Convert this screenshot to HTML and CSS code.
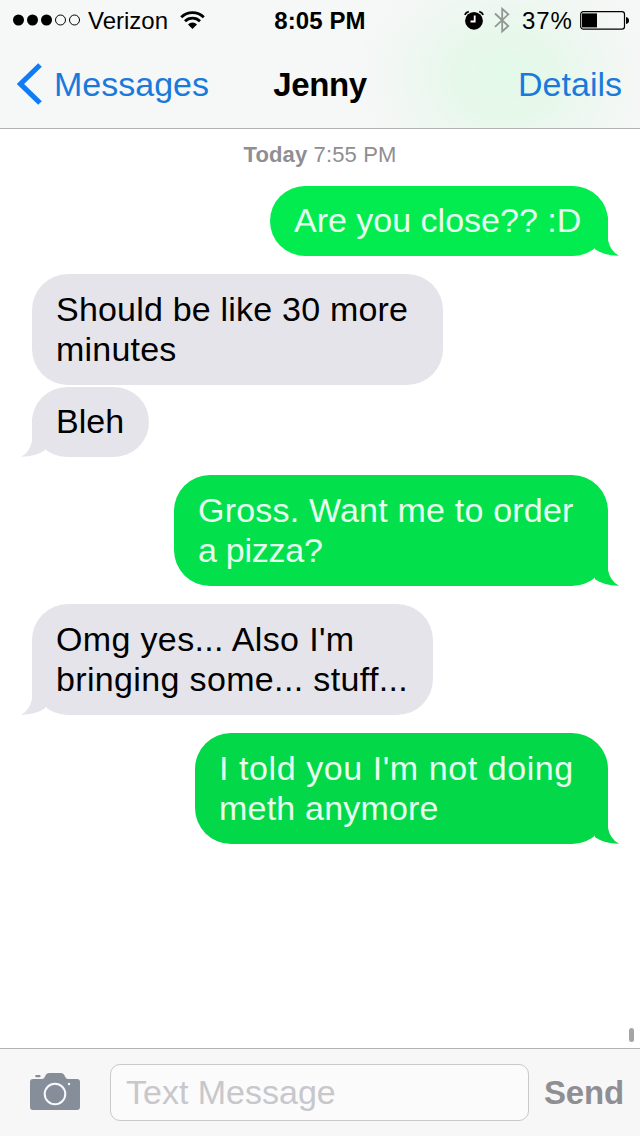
FILE: index.html
```html
<!DOCTYPE html>
<html lang="en">
<head>
    <meta charset="UTF-8">
    <title>Messages</title>
    <link rel="stylesheet" href="styles.css">
</head>
<body>

    <div class="phone">
        <header>
            <div class="status">
                <div class="status-left">
                    <svg class="signal" width="68" height="12" viewBox="0 0 68 12">
                        <circle cx="5.5" cy="6" r="5.5"/>
                        <circle cx="19.5" cy="6" r="5.5"/>
                        <circle cx="33.5" cy="6" r="5.5"/>
                        <circle class="empty" cx="47.5" cy="6" r="5"/>
                        <circle class="empty" cx="61.5" cy="6" r="5"/>
                    </svg>
                    <span class="carrier">Verizon</span>
                    <svg class="wifi" width="25" height="19" viewBox="0 0 25 19">
                        <path class="arc" d="M1.2 6.2a16 16 0 0 1 22.6 0M5 10.2a10.8 10.8 0 0 1 15 0"/>
                        <path d="M8 13.4a6.5 6.5 0 0 1 9 0L12.5 18z"/>
                    </svg>
                </div>
                <span class="clock">8:05 PM</span>
                <div class="status-right">
                    <svg class="alarm" width="20" height="20" viewBox="0 0 20 20">
                        <circle cx="10" cy="10.8" r="8.9"/>
                        <path class="bells" d="M.8 4.9Q1.8 2.1 4.8 1.6M19.2 4.9Q18.2 2.1 15.2 1.6"/>
                        <path class="hands" d="M10.7 5.5v6H6.5"/>
                    </svg>
                    <svg class="bluetooth" width="16" height="28" viewBox="0 0 16 28">
                        <path d="M1 7.5L14.3 20 8.2 25.5V2.8L14.3 8.3 1 20.8"/>
                    </svg>
                    <span class="percent">37%</span>
                    <svg class="battery" width="50" height="20" viewBox="0 0 50 20">
                        <rect class="case" x=".7" y="1.6" width="43.8" height="17.6" rx="2.6"/>
                        <rect x="2" y="3.4" width="15" height="14"/>
                        <path d="M46 7q3 .5 3 3.5t-3 3.5z"/>
                    </svg>
                </div>
            </div>
            <nav>
                <a class="back">
                    <svg width="27" height="42" viewBox="0 0 27 42">
                        <path d="M24 2L4.5 21 24 40"/>
                    </svg>
                    <span>Messages</span>
                </a>
                <h1>Jenny</h1>
                <a class="details">Details</a>
            </nav>
        </header>

        <main>
            <p class="stamp"><b>Today</b> 7:55 PM</p>

            <div class="bubble sent close">
                <p>Are you close?? :D</p>
                <svg class="tail" width="41" height="40"><path d="M30 0V24Q32 35 41 39.8Q27 40 17 33.3V12z"/></svg>
            </div>
            <div class="bubble received should">
                <p class="loose">Should be like 30 more</p>
                <p class="loose">minutes</p>
            </div>
            <div class="bubble received bleh">
                <p>Bleh</p>
                <svg class="tail" width="41" height="40"><path d="M30 0V24Q32 35 41 39.8Q27 40 17 33.3V12z"/></svg>
            </div>
            <div class="bubble sent pizza">
                <p class="loose">Gross. Want me to order</p>
                <p class="tight">a pizza?</p>
                <svg class="tail" width="41" height="40"><path d="M30 0V24Q32 35 41 39.8Q27 40 17 33.3V12z"/></svg>
            </div>
            <div class="bubble received stuff">
                <p class="looser">Omg yes... Also I'm</p>
                <p class="looser">bringing some... stuff...</p>
                <svg class="tail" width="41" height="40"><path d="M30 0V24Q32 35 41 39.8Q27 40 17 33.3V12z"/></svg>
            </div>
            <div class="bubble sent told">
                <p class="loosest">I told you I'm not doing</p>
                <p class="loose">meth anymore</p>
                <svg class="tail" width="41" height="40"><path d="M30 0V24Q32 35 41 39.8Q27 40 17 33.3V12z"/></svg>
            </div>
            <div class="scrollbar"></div>
        </main>

        <footer>
            <svg class="camera" width="50" height="38" viewBox="0 0 50 38">
                <path d="M3 7H12Q14 7 15 4.5L16 2.5Q17 1 19 1H31Q33 1 34 2.5L35 4.5Q36 7 38 7H47Q50 7 50 10V35Q50 38 47 38H3Q0 38 0 35V10Q0 7 3 7z"/>
                <rect x="5.3" y="3" width="5.2" height="2.2" rx=".8"/>
                <circle class="lens" cx="25" cy="22" r="10.3"/>
                <circle class="flash" cx="39" cy="12" r="1.2"/>
            </svg>
            <div class="field">Text Message</div>
            <span class="send">Send</span>
        </footer>
    </div>

</body>
</html>
```

FILE: styles.css
```css
* {
    margin: 0;
    padding: 0;
    box-sizing: border-box;
}
body {
    font-family: "Liberation Sans", Arial, sans-serif;
    background-color: white;
    color: black;
}
svg {
    display: block;
    flex: none;
}
.phone {
    display: flex;
    flex-direction: column;
    width: 640px;
    height: 1136px;
    overflow: hidden;
}

/* status bar and title */
header {
    height: 129px;
    border-bottom: 1px solid #b2b2b2;
    background: radial-gradient(ellipse 150px 125px at 505px 76px, #e2f9e8 0%, #e7f8eb 35%, #f1f7f3 70%, #f6f7f7 100%);
}
.status {
    display: grid;
    grid-template-columns: 1fr auto 1fr;
    align-items: center;
    height: 40px;
    font-size: 24px;
    white-space: nowrap;
}
.status span {
    padding-top: 2px;
}
.status-left {
    display: flex;
    align-items: center;
    padding-left: 13px;
}
.signal .empty {
    fill: none;
    stroke: black;
    stroke-width: 1;
}
.carrier {
    margin-left: 7px;
    width: 81px;
}
.wifi {
    margin-left: 11px;
}
.wifi .arc {
    fill: none;
    stroke: black;
    stroke-width: 2.8;
}
.clock {
    font-weight: bold;
    letter-spacing: 0.1px;
}
.status-right {
    display: flex;
    align-items: center;
    justify-content: flex-end;
    padding-right: 10px;
}
.alarm path {
    fill: none;
    stroke: black;
    stroke-width: 1.8;
}
.alarm .hands {
    stroke: white;
}
.bluetooth {
    margin-left: 10px;
}
.bluetooth path {
    fill: none;
    stroke: #939794;
    stroke-width: 1.8;
}
.percent {
    margin-left: 12px;
    width: 51px;
    letter-spacing: 0.9px;
}
.battery {
    margin-left: 7px;
}
.battery .case {
    fill: none;
    stroke: black;
    stroke-width: 1.2;
}
nav {
    display: grid;
    grid-template-columns: 1fr auto 1fr;
    align-items: center;
    height: 88px;
    font-size: 34px;
    color: #1a7adb;
}
.back {
    display: flex;
    align-items: center;
    padding-left: 16px;
}
.back svg path {
    fill: none;
    stroke: #0f7cf5;
    stroke-width: 5.2;
}
.back span {
    margin-left: 11px;
}
nav h1 {
    padding-top: 2px;
    font-size: 33px;
    letter-spacing: -0.4px;
    color: black;
}
.details {
    text-align: right;
    padding-right: 18px;
}

/* conversation */
main {
    flex: 1;
    display: flex;
    flex-direction: column;
    position: relative;
    padding: 0 32px;
}
.stamp {
    height: 57px;
    padding-top: 12px;
    line-height: 28px;
    font-size: 22px;
    letter-spacing: 0.15px;
    text-align: center;
    color: #8e8e93;
}
.bubble {
    position: relative;
    height: 111px;
    border-radius: 36px;
    padding: 15px 24px 0;
    margin-bottom: 18px;
    font-size: 34px;
    line-height: 40px;
    white-space: nowrap;
}
.sent {
    align-self: flex-end;
    color: #e6ffee;
}
.received {
    align-self: flex-start;
    background-color: #e5e4ea;
    color: black;
}
.loose {
    letter-spacing: 0.2px;
}
.looser {
    letter-spacing: 0.35px;
}
.loosest {
    letter-spacing: 0.57px;
}
.tight {
    letter-spacing: -0.25px;
}
.tail {
    position: absolute;
    bottom: 0;
    right: -11px;
}
.received .tail {
    right: auto;
    left: -11px;
    transform: scaleX(-1);
    fill: #e5e4ea;
}
.close {
    width: 338px;
    height: 70px;
    padding-top: 14px;
    background-color: #02ec50;
}
.close .tail {
    fill: #02ec50;
}
.should {
    width: 411px;
    margin-bottom: 2px;
}
.bleh {
    width: 117px;
    height: 70px;
    padding-top: 14px;
}
.pizza {
    width: 434px;
    background-color: #02e14b;
}
.pizza .tail {
    fill: #02e14b;
}
.stuff {
    width: 401px;
}
.told {
    width: 413px;
    background-color: #02d848;
}
.told .tail {
    fill: #02d848;
}
.scrollbar {
    position: absolute;
    right: 6px;
    bottom: 6px;
    width: 5px;
    height: 14px;
    border-radius: 3px;
    background-color: #a5a5a5;
}

/* message entry */
footer {
    display: flex;
    align-items: center;
    height: 88px;
    padding-left: 30px;
    border-top: 1px solid #b2b2b2;
    background-color: #f7f7f7;
    font-size: 34px;
}
.camera {
    margin-bottom: 4px;
    fill: #868e99;
}
.camera .lens {
    fill: none;
    stroke: #f7fbff;
    stroke-width: 2;
}
.camera .flash {
    fill: #f7fbff;
}
.field {
    width: 419px;
    height: 57px;
    margin-left: 30px;
    padding-left: 15px;
    border: 1px solid #c8c8cd;
    border-radius: 10px;
    background-color: #fbfbfb;
    line-height: 55px;
    color: #c7c7cc;
}
.send {
    margin-left: 15px;
    font-size: 33px;
    letter-spacing: -0.2px;
    font-weight: bold;
    color: #8e8e93;
}
```
